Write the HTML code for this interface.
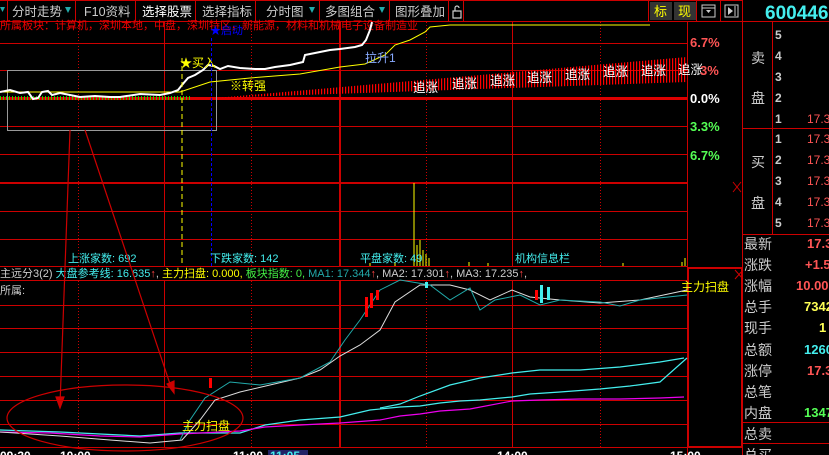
<!DOCTYPE html>
<html><head><meta charset="utf-8"><style>
html,body{margin:0;padding:0;background:#000;overflow:hidden}
body{width:829px;height:455px;position:relative;font-family:"Liberation Sans","Noto Sans CJK SC",sans-serif}
svg{position:absolute;left:0;top:0}
text{font-family:"Liberation Sans","Noto Sans CJK SC",sans-serif}
</style></head><body>
<svg width="829" height="455" viewBox="0 0 829 455">
<defs>
<pattern id="vb" width="3" height="10" patternUnits="userSpaceOnUse"><rect x="0" y="0" width="1.2" height="10" fill="#f00"/></pattern>
<pattern id="gb" width="3" height="10" patternUnits="userSpaceOnUse"><rect x="0" y="0" width="1" height="10" fill="#0f0"/></pattern>
</defs>
<rect x="0" y="0" width="743" height="22" fill="#000"/>
<g stroke="#c00" stroke-width="1">
<line x1="0" y1="0.5" x2="743" y2="0.5"/><line x1="0" y1="21.5" x2="829" y2="21.5"/>
<line x1="7.5" y1="0" x2="7.5" y2="22"/><line x1="75.5" y1="0" x2="75.5" y2="22"/><line x1="135.5" y1="0" x2="135.5" y2="22"/><line x1="195.5" y1="0" x2="195.5" y2="22"/><line x1="255.5" y1="0" x2="255.5" y2="22"/><line x1="319.5" y1="0" x2="319.5" y2="22"/><line x1="389.5" y1="0" x2="389.5" y2="22"/><line x1="448.5" y1="0" x2="448.5" y2="22"/><line x1="463.5" y1="0" x2="463.5" y2="22"/><line x1="648.5" y1="0" x2="648.5" y2="22"/><line x1="696.5" y1="0" x2="696.5" y2="22"/><line x1="720.5" y1="0" x2="720.5" y2="22"/><line x1="742.5" y1="0" x2="742.5" y2="22"/>
</g>
<g fill="#2aa"><polygon points="0,7 5,7 2.5,12"/><polygon points="65,7 71,7 68,13"/><polygon points="309,7 315,7 312,13"/><polygon points="379,7 385,7 382,13"/></g>
<g fill="#ccc" font-size="12.5">
<text x="12" y="16">分时走势</text><text x="84" y="16">F10资料</text><text x="142" y="16" fill="#fff">选择股票</text><text x="202" y="16">选择指标</text><text x="266" y="16">分时图</text><text x="325" y="16">多图组合</text><text x="395" y="16">图形叠加</text>
</g>
<path d="M453 11h8v7h-8z M455 11v-3a2 2 0 0 1 4 0" fill="none" stroke="#ccc" stroke-width="1.2"/>
<rect x="650" y="2" width="22" height="18" fill="#333"/><rect x="674" y="2" width="22" height="18" fill="#333"/>
<text x="654" y="16" fill="#ff0" font-size="13">标</text><text x="678" y="16" fill="#ff0" font-size="13">现</text>
<rect x="702" y="5" width="13" height="12" fill="none" stroke="#ccc"/><line x1="702" y1="8" x2="715" y2="8" stroke="#ccc"/><polygon points="706,10 711,10 708.5,13" fill="#ccc"/>
<rect x="725" y="5" width="13" height="12" fill="none" stroke="#ccc"/><polygon points="728,7 733,11 728,15" fill="#ccc"/><line x1="735" y1="6" x2="735" y2="16" stroke="#ccc"/>
<text x="765" y="19" fill="#4ee" font-size="19" font-weight="bold">600446</text>

<g fill="#c00">
<rect x="0" y="43" width="687" height="1"/><rect x="0" y="70" width="687" height="1"/>
<rect x="0" y="126" width="687" height="1"/><rect x="0" y="154" width="687" height="1"/>
<rect x="0" y="182" width="687" height="2"/><rect x="0" y="211" width="687" height="1"/><rect x="0" y="239" width="687" height="1"/>
<rect x="164" y="22" width="1" height="244"/><rect x="512" y="22" width="1" height="244"/>
<rect x="687" y="22" width="1" height="433"/><rect x="742" y="22" width="1" height="433"/>
<rect x="339" y="22" width="2" height="244"/>
</g>
<g stroke="#c00" stroke-width="1" stroke-dasharray="1,2">
<line x1="78.5" y1="22" x2="78.5" y2="266"/><line x1="251.5" y1="22" x2="251.5" y2="266"/><line x1="426.5" y1="22" x2="426.5" y2="266"/><line x1="600.5" y1="22" x2="600.5" y2="266"/>
<line x1="78.5" y1="281" x2="78.5" y2="447"/><line x1="251.5" y1="281" x2="251.5" y2="447"/><line x1="426.5" y1="281" x2="426.5" y2="447"/><line x1="600.5" y1="281" x2="600.5" y2="447"/>
</g>
<rect x="0" y="97" width="687" height="3" fill="#d00"/>
<polygon points="215,98 687,57 687,82 215,98" fill="url(#vb)"/>
<rect x="0" y="96" width="190" height="4" fill="url(#gb)" opacity="0.8"/>
<text x="0" y="29" fill="#e00" font-size="11">所属板块：计算机，深圳本地，中盘，深圳特区，新能源，材料和机械电子设备制造业</text>
<text x="210" y="34" fill="#00f" font-size="11">★启动</text>
<rect x="7.5" y="70.5" width="209" height="60" fill="none" stroke="#999"/>
<polyline fill="none" stroke="#ff0" stroke-width="1" points="0,92 180,92 195,87 210,82 250,78 300,74 340,67 365,64 385,55 395,45 410,40 425,32 430,27 450,25 650,25"/>
<polyline fill="none" stroke="#fff" stroke-width="2" points="0,92 10,90 20,93 28,92 33,99 38,98 42,92 48,91 52,95 60,93 70,95 80,97 95,96 110,97 120,97 140,94 160,95 170,93 178,90 182,85 188,78 195,75 203,70 208,65 214,66 220,69 228,66 240,68 255,69 265,69 275,67 290,65 303,62 305,55 320,52 330,50 340,49 355,47 362,45 366,40 370,30 372,22 M420,24 425,25 435,27 445,24 455,25 460,22 475,24 485,32 495,32 500,28 520,28 530,25 540,22 555,26 565,28 575,24 590,26 600,25 610,24 620,27 650,25"/>
<text x="180" y="67" fill="#ff0" font-size="12">★买入</text>
<text x="230" y="90" fill="#ff0" font-size="12">※转强</text>
<text x="365" y="62" fill="#8af" font-size="12">拉升1</text>
<g fill="#fff" font-size="12.5">
<text x="413" y="92">追涨</text><text x="452" y="88">追涨</text><text x="490" y="85">追涨</text><text x="527" y="82">追涨</text><text x="565" y="79">追涨</text><text x="603" y="76">追涨</text><text x="641" y="75">追涨</text><text x="678" y="74">追涨</text>
</g>
<line x1="182" y1="58" x2="182" y2="266" stroke="#ff0" stroke-dasharray="5,3"/>
<line x1="211.5" y1="38" x2="211.5" y2="266" stroke="#00f" stroke-dasharray="3,2"/>
<g stroke="#ff0"><line x1="414" y1="183" x2="414" y2="266"/><line x1="417" y1="245" x2="417" y2="266"/><line x1="420" y1="240" x2="420" y2="266"/><line x1="423" y1="250" x2="423" y2="266"/><line x1="426" y1="254" x2="426" y2="266"/><line x1="429" y1="258" x2="429" y2="266"/><line x1="395" y1="262" x2="395" y2="266"/><line x1="370" y1="263" x2="370" y2="266"/><line x1="469" y1="262" x2="469" y2="266"/><line x1="488" y1="263" x2="488" y2="266"/><line x1="685" y1="258" x2="685" y2="266"/><line x1="682" y1="262" x2="682" y2="266"/><line x1="623" y1="263" x2="623" y2="266"/></g>
<g font-size="13" font-weight="bold"><text x="690" y="47" fill="#f55">6.7%</text><text x="700" y="75" fill="#f55">3%</text><text x="690" y="103" fill="#fff">0.0%</text><text x="690" y="131" fill="#5f5">3.3%</text><text x="690" y="160" fill="#5f5">6.7%</text></g>
<g stroke="#c00"><line x1="733" y1="182" x2="741" y2="192"/><line x1="741" y1="182" x2="733" y2="192"/><line x1="735" y1="270" x2="743" y2="279"/><line x1="743" y1="270" x2="735" y2="279"/></g>
<g fill="#4ee" font-size="11"><text x="68" y="262">上涨家数:  692</text><text x="210" y="262">下跌家数:  142</text><text x="360" y="262">平盘家数:  49</text><text x="515" y="262">机构信息栏</text></g>
<rect x="0" y="266" width="687" height="1" fill="#c00"/><rect x="0" y="280" width="687" height="1" fill="#c00"/>
<text x="0" y="277" font-size="11"><tspan fill="#ccc">主远分3(2) </tspan><tspan fill="#4ee">大盘参考线: 16.635</tspan><tspan fill="#f44">↑</tspan><tspan fill="#ccc">, </tspan><tspan fill="#ff0">主力扫盘: 0.000, </tspan><tspan fill="#4e4">板块指数: 0, </tspan><tspan fill="#2aa">MA1: 17.344</tspan><tspan fill="#f44">↑</tspan><tspan fill="#ccc">, MA2: 17.301</tspan><tspan fill="#f44">↑</tspan><tspan fill="#ccc">, MA3: 17.235</tspan><tspan fill="#f44">↑</tspan><tspan fill="#ccc">,</tspan></text>
<text x="0" y="294" fill="#ccc" font-size="11">所属:</text>
<g fill="#c00"><rect x="0" y="305" width="687" height="1"/><rect x="0" y="328" width="687" height="1"/><rect x="0" y="352" width="687" height="1"/><rect x="0" y="376" width="687" height="1"/><rect x="0" y="400" width="687" height="1"/><rect x="0" y="424" width="687" height="1"/><rect x="0" y="447" width="687" height="1"/>
<rect x="164" y="281" width="1" height="166"/><rect x="512" y="281" width="1" height="166"/><rect x="339" y="281" width="2" height="166"/></g>
<rect x="688" y="268" width="54" height="179" fill="none" stroke="#c00" stroke-width="2"/>
<text x="681" y="291" fill="#ff0" font-size="12">主力扫盘</text>
<polyline fill="none" stroke="#4ee" stroke-width="1.2" points="0,430 60,432 100,434 140,436 180,433 240,433 265,425 300,420 340,417 370,410 400,407 420,406 440,403 460,401 480,400 512,397 530,394 560,392 600,389 630,386 660,382 687,358"/>
<polyline fill="none" stroke="#4ee" stroke-width="1.2" points="380,408 400,404 420,396 450,385 480,378 512,373 540,370 580,370 620,367 660,362 684,358"/>
<polyline fill="none" stroke="#e0e" stroke-width="1.2" points="0,432 50,433 100,436 140,437 180,434 240,431 265,427 300,425 340,423 380,420 400,416 420,414 440,411 470,409 512,401 540,400 580,399 620,399 660,398 684,397"/>
<polyline fill="none" stroke="#ddd" stroke-width="1" points="0,432 60,436 110,440 150,443 182,440 200,420 215,400 240,392 270,385 300,378 320,370 340,356 360,345 380,330 395,302 420,285 450,285 470,290 490,300 512,290 530,297 560,300 600,303 640,300 687,290"/>
<polyline fill="none" stroke="#2aa" stroke-width="1" points="180,440 190,420 205,398 230,382 260,385 300,378 330,362 345,340 360,320 372,302 380,290 400,280 430,285 450,300 470,288 480,310 495,300 520,295 540,305 560,300 600,302 620,306 640,300 687,295"/>
<g fill="#f00"><rect x="365" y="297" width="3" height="20"/><rect x="370" y="293" width="3" height="15"/><rect x="376" y="290" width="3" height="10"/><rect x="209" y="378" width="3" height="10"/><rect x="535" y="290" width="3" height="10"/></g>
<g fill="#4ee"><rect x="425" y="282" width="3" height="6"/><rect x="540" y="285" width="3" height="18"/><rect x="547" y="287" width="3" height="13"/></g>
<text x="182" y="430" fill="#ff0" font-size="12">主力扫盘</text>
<ellipse cx="125" cy="418" rx="118" ry="33" fill="none" stroke="#c00" stroke-width="1.2"/>
<g stroke="#c00" stroke-width="1.2" fill="#c00"><line x1="70" y1="130" x2="60" y2="405"/><polygon points="56,397 64,397 60,408"/><line x1="85" y1="130" x2="172" y2="390"/><polygon points="167,384 174,381 174,393"/></g>
<rect x="268" y="450" width="40" height="5" fill="#226"/>
<g fill="#fff" font-size="12" font-weight="bold"><text x="0" y="460">09:30</text><text x="60" y="460">10:00</text><text x="233" y="460">11:00</text><text x="270" y="460" fill="#4ee">11:05</text><text x="497" y="460">14:00</text><text x="670" y="460">15:00</text></g>
<g fill="#c00"><rect x="772" y="22" width="1" height="213"/><rect x="743" y="128" width="86" height="1"/><rect x="743" y="234" width="86" height="1"/><rect x="743" y="422" width="86" height="1"/><rect x="743" y="443" width="86" height="1"/></g>
<g fill="#ccc" font-size="14"><text x="751" y="63">卖</text><text x="751" y="103">盘</text><text x="751" y="167">买</text><text x="751" y="208">盘</text></g>
<g fill="#ccc" font-size="12" font-weight="bold"><text x="775" y="39">5</text><text x="775" y="60">4</text><text x="775" y="81">3</text><text x="775" y="102">2</text><text x="775" y="123">1</text><text x="775" y="143">1</text><text x="775" y="164">2</text><text x="775" y="185">3</text><text x="775" y="206">4</text><text x="775" y="227">5</text></g>
<g fill="#f55" font-size="12"><text x="807" y="123">17.3</text><text x="807" y="143">17.3</text><text x="807" y="164">17.3</text><text x="807" y="185">17.3</text><text x="807" y="206">17.3</text><text x="807" y="227">17.3</text></g>
<g fill="#ccc" font-size="14"><text x="744" y="249">最新</text><text x="744" y="270">涨跌</text><text x="744" y="291">涨幅</text><text x="744" y="312">总手</text><text x="744" y="333">现手</text><text x="744" y="355">总额</text><text x="744" y="376">涨停</text><text x="744" y="397">总笔</text><text x="744" y="418">内盘</text><text x="744" y="439">总卖</text><text x="744" y="460">总买</text></g>
<g font-size="13" font-weight="bold"><text x="807" y="248" fill="#f55">17.3</text><text x="805" y="269" fill="#f55">+1.5</text><text x="796" y="290" fill="#f55">10.00</text><text x="804" y="311" fill="#ff5">7342</text><text x="819" y="332" fill="#ff5">1</text><text x="804" y="354" fill="#4ee">1260</text><text x="807" y="375" fill="#f55">17.3</text><text x="804" y="417" fill="#5f5">1347</text></g>
</svg>
</body></html>
